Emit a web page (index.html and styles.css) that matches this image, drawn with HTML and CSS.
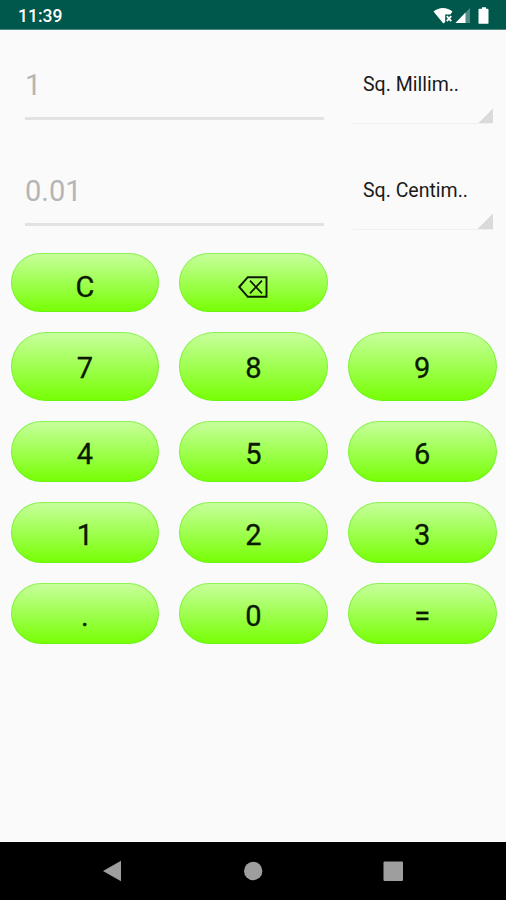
FILE: index.html
```html
<!DOCTYPE html>
<html lang="en">
<head>
    <meta charset="UTF-8">
    <meta name="viewport" content="width=device-width, initial-scale=1.0">
    <title>Area Converter</title>
    <link rel="stylesheet" href="styles.css">
</head>
<body>
    <div id="app">
        <!-- Status Bar -->
        <header class="status-bar">
            <span class="clock">11:39</span>
            <svg class="status-icons" width="58" height="20" viewBox="0 0 58 20">
                <path d="M0.5 5.5C6 0.8 14 0.8 19.5 5.5L17.3 8.6H12.2V16L10.3 17.6Z" fill="#fff"/>
                <path d="M13.8 10.2l4.400 5M18.2 10.2l-4.400 5" stroke="#fff" stroke-width="1.8"/>
                <path d="M37 2V17H22.5Z" fill="#4d8d83"/>
                <path d="M32.5 6.6V17H22.5Z" fill="#fff"/>
                <path d="M49 1.2h4v1.6h1.6q.9 0 .9.9v13.2q0 .9-.9.9h-8.200q-.9 0-.9-.9V3.7q0-.9.9-.9H49Z" fill="#fff"/>
            </svg>
        </header>

        <!-- Values and Units -->
        <main>
            <div class="value-row">
                <input class="value" type="text" placeholder="1" aria-label="From value">
                <button class="unit">Sq. Millim..</button>
            </div>
            <div class="value-row">
                <input class="value" type="text" placeholder="0.01" aria-label="To value">
                <button class="unit">Sq. Centim..</button>
            </div>

            <!-- Keypad -->
            <div class="keypad">
                <button class="key key-top">C</button>
                <button class="key key-top" aria-label="Backspace">
                    <svg width="30" height="22" viewBox="0 0 30 22" fill="none" stroke="#0b1a00">
                        <path d="M1.2 11L9.8 1.2H28.5V20.8H9.8Z" stroke-width="1.9"/>
                        <path d="M12 4.7L24 17.3M24 4.7L12 17.3" stroke-width="1.7"/>
                    </svg>
                </button>
                <span></span>
                <button class="key key-tall">7</button>
                <button class="key key-tall">8</button>
                <button class="key key-tall">9</button>
                <button class="key">4</button>
                <button class="key">5</button>
                <button class="key">6</button>
                <button class="key">1</button>
                <button class="key">2</button>
                <button class="key">3</button>
                <button class="key">.</button>
                <button class="key">0</button>
                <button class="key">=</button>
            </div>
        </main>

        <!-- Navigation Bar -->
        <nav class="nav-bar">
            <svg width="20" height="22" viewBox="0 0 20 22"><path d="M0 11L18 0.8V21.2Z" fill="#9e9e9e"/></svg>
            <svg width="20" height="22" viewBox="0 0 20 22"><circle cx="10.2" cy="11" r="9.2" fill="#9e9e9e"/></svg>
            <svg width="20" height="22" viewBox="0 0 20 22"><rect x="0.5" y="1.5" width="19.5" height="19.5" rx="1" fill="#9e9e9e"/></svg>
        </nav>
    </div>
</body>
</html>
```

FILE: styles.css
```css
/* General Page Styling */
* {
    box-sizing: border-box;
}

body {
    background-color: #fafafa;
    font-family: Roboto, sans-serif;
    margin: 0;
}

/* App Container */
#app {
    display: flex;
    flex-direction: column;
    height: 100vh;
    overflow: hidden;
}

main {
    flex: 1;
}

/* Status Bar */
.status-bar {
    display: flex;
    justify-content: space-between;
    height: 30px;
    padding: 6px 15px 0 18px;
    background-color: #00574b;
    border-bottom: 1px solid #50887f;
}

.clock {
    color: #fff;
    font-size: 17.5px;
    font-weight: 500;
    line-height: 20px;
}

/* Values and Units */
.value-row {
    display: flex;
    justify-content: space-between;
    height: 106px;
    padding: 22px 13px 0 25px;
}

.value {
    width: 299px;
    height: 68px;
    padding: 1px 0 0;
    background: none;
    border: none;
    border-bottom: 3px solid #e2e2e2;
    border-radius: 0;
    font-family: inherit;
    font-size: 29px;
    outline: none;
}

.value::placeholder {
    color: #b5b5b5;
    opacity: 1;
}

.unit {
    width: 140px;
    height: 72px;
    padding: 0 0 6px 10px;
    background: linear-gradient(135deg, transparent 50%, #dadada 50%) right bottom / 15px 15px no-repeat;
    border: none;
    border-bottom: 1px solid #f0f0f0;
    color: #1a1a1a;
    font-family: inherit;
    font-size: 19.5px;
    text-align: left;
}

/* Keypad */
.keypad {
    display: grid;
    grid-template-columns: repeat(3, 1fr);
    gap: 20px;
    padding: 11px 9.5px 0 10.5px;
}

.key {
    display: flex;
    justify-content: center;
    align-items: center;
    height: 61px;
    padding: 5px 0 0;
    background: linear-gradient(#c8ff9e, #76ff03) border-box;
    border: 1px solid rgba(100, 235, 30, 0.6);
    border-radius: 35px;
    color: #0b1a00;
    font-family: inherit;
    font-size: 29px;
    -webkit-text-stroke: 0.3px #0b1a00;
}

.key-top {
    height: 59px;
    padding-top: 8px;
}

.key-tall {
    height: 69px;
    padding-top: 2px;
}

/* Navigation Bar */
.nav-bar {
    display: flex;
    justify-content: center;
    gap: 120px;
    height: 58px;
    padding-top: 18px;
    background-color: #000;
}
```
